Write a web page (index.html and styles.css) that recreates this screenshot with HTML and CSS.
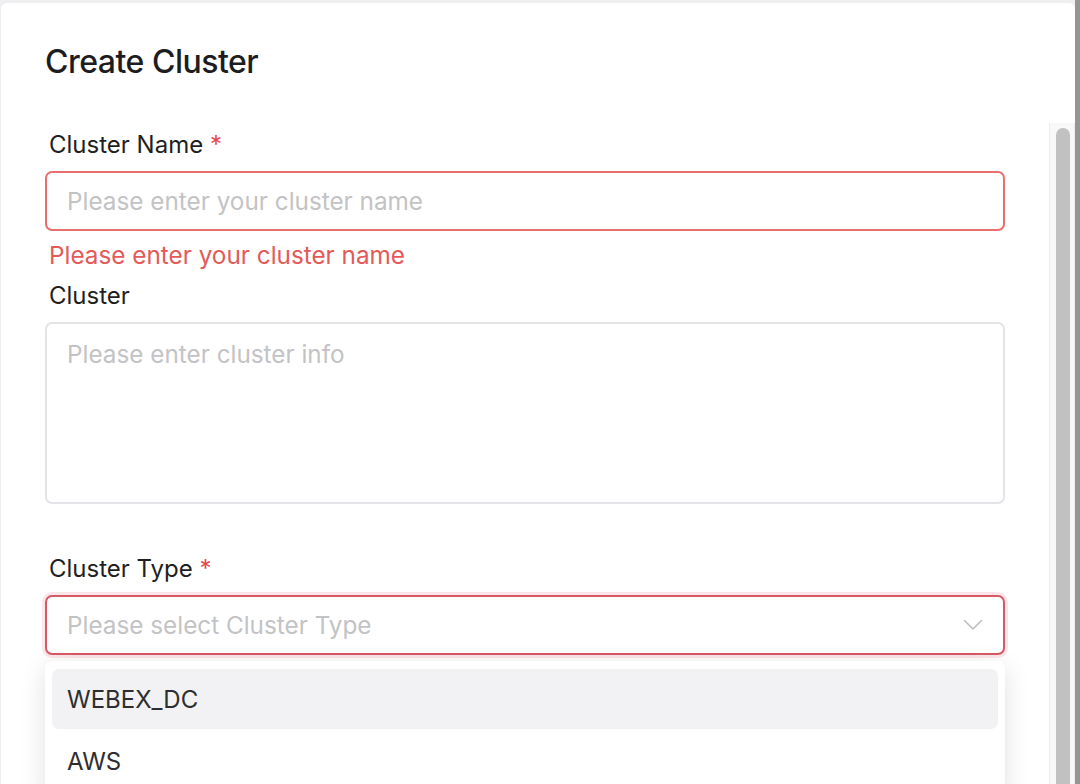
FILE: index.html
```html
<!DOCTYPE html>
<html lang="en">
<head>
<meta charset="utf-8">
<title>Create Cluster</title>
<link rel="stylesheet" href="styles.css">
</head>
<body>
<div class="screen">
  <div class="backdrop">
    <section class="modal">
      <header class="modal-header">
        <h2 class="modal-title">Create Cluster</h2>
      </header>
      <div class="modal-body">
        <form class="form">
          <div class="field">
            <label class="label">Cluster Name <span class="req">*</span></label>
            <div class="control input is-error">
              <span class="placeholder">Please enter your cluster name</span>
            </div>
            <div class="error">Please enter your cluster name</div>
          </div>
          <div class="field">
            <label class="label">Cluster</label>
            <div class="control textarea">
              <span class="placeholder">Please enter cluster info</span>
            </div>
            <div class="error"></div>
          </div>
          <div class="field">
            <label class="label">Cluster Type <span class="req">*</span></label>
            <div class="select-wrap">
              <div class="control select is-focus">
                <span class="placeholder">Please select Cluster Type</span>
                <svg class="chevron" width="20" height="12" viewBox="0 0 20 12" fill="none"><path d="M1.5 1.5 L10 10 L18.5 1.5" stroke="#bdbdc1" stroke-width="1.6" stroke-linecap="round" stroke-linejoin="round"/></svg>
              </div>
              <ul class="dropdown">
                <li class="option is-active">WEBEX_DC</li>
                <li class="option">AWS</li>
              </ul>
            </div>
          </div>
        </form>
        <div class="scrollbar"><div class="thumb"></div></div>
      </div>
    </section>
  </div>
  <div class="edge"></div>
</div>
</body>
</html>
```
FILE: styles.css
```css
* { box-sizing: border-box; }
html, body { margin: 0; padding: 0; }
body {
  font-family: "Inter", "Liberation Sans", sans-serif;
  color: #1f1f21;
  width: 1080px;
  height: 784px;
  overflow: hidden;
}
.screen {
  display: flex;
  height: 784px;
}
.backdrop {
  flex: 1;
  background: #efeff2;
  padding: 3px 0 0 1px;
  display: flex;
}
.edge {
  width: 5px;
  background: #959595;
}
.modal {
  flex: 1;
  background: #fff;
  border-radius: 6px 6px 0 0;
  display: flex;
  flex-direction: column;
  overflow: hidden;
}
.modal-header {
  height: 120px;
  padding: 39px 0 0 44px;
}
.modal-title {
  margin: 0;
  font-size: 32px;
  line-height: 40px;
  font-weight: 500;
  color: #1d1d1f;
  letter-spacing: -0.5px;
}
.modal-body {
  flex: 1;
  display: grid;
  grid-template-columns: 1fr 26px;
  min-height: 0;
}
.form {
  padding: 7px 44px 0 44px;
  display: flex;
  flex-direction: column;
}
.field {
  display: flex;
  flex-direction: column;
}
.label {
  font-size: 24px;
  line-height: 30px;
  padding-left: 4px;
  margin-bottom: 11px;
  color: #1f1f21;
}
.req { color: #e5484d; }
.control {
  border: 2px solid #e4e4e8;
  border-radius: 7px;
  padding: 0 20px;
  display: flex;
  align-items: center;
  background: #fff;
}
.placeholder {
  font-size: 24.3px;
  line-height: 30px;
  color: #c3c3c5;
}
.input { height: 60px; }
.input.is-error { border-color: #ea6e6e; }
.textarea {
  height: 182px;
  align-items: flex-start;
  padding-top: 15px;
}
.error {
  margin-top: 9px;
  height: 30px;
  margin-bottom: 11px;
  font-size: 24.3px;
  line-height: 30px;
  padding-left: 4px;
  color: #e35a58;
}
.select-wrap { position: relative; }
.select {
  height: 60px;
  justify-content: space-between;
  border-color: #d65a66;
  box-shadow: 0 0 0 3px rgba(229, 80, 96, 0.14);
}
.dropdown {
  position: absolute;
  top: 66px;
  left: 0;
  right: 0;
  margin: 0;
  list-style: none;
  padding: 8px 7px;
  background: #fff;
  border-radius: 7px;
  box-shadow: 0 6px 26px rgba(0, 0, 0, 0.12);
}
.option {
  height: 60px;
  margin-bottom: 2px;
  border-radius: 7px;
  padding: 0 15px;
  display: flex;
  align-items: center;
  font-size: 24px;
  color: #2e2e30;
}
.option.is-active { background: #f2f2f4; }
.scrollbar {
  border-left: 1px solid #ececee;
  border-right: 1px solid #ececee;
  background: #f8f8f9;
  padding: 5px 0 0 6px;
}
.thumb {
  width: 14px;
  height: 100%;
  background: #c1c1c1;
  border-radius: 7px 7px 0 0;
}
```
